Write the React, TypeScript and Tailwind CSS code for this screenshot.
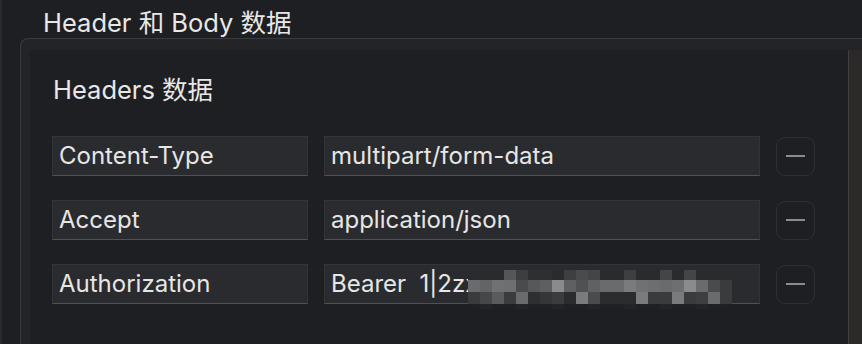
import React from "react";

const mosaic: [string, string, string][] = [
  ["#2a2b2e", "#6a6b6d", "#3a3b3d"],
  ["#2a2b2e", "#636466", "#46474a"],
  ["#2a2b2e", "#707173", "#5a5b5d"],
  ["#555658", "#6e6f71", "#3b3c3e"],
  ["#3d3e40", "#4a4b4d", "#6a6b6d"],
  ["#2e2f31", "#575859", "#2e2f31"],
  ["#2e2f31", "#5e5f61", "#353638"],
  ["#2a2b2e", "#8a8b8d", "#3b3c3e"],
  ["#3e3f41", "#5f6062", "#2b2c2e"],
  ["#4a4b4d", "#505153", "#7a7b7d"],
  ["#444547", "#606163", "#4a4b4d"],
  ["#2a2b2e", "#6a6b6d", "#2b2c2e"],
  ["#2a2b2e", "#6a6b6d", "#2b2c2e"],
  ["#3e3f41", "#7a7b7d", "#2b2c2e"],
  ["#2a2b2e", "#707173", "#7a7b7d"],
  ["#2a2b2e", "#6d6e70", "#3a3b3d"],
  ["#444547", "#6a6b6d", "#3a3b3d"],
  ["#2a2b2e", "#6e6f71", "#7a7b7d"],
  ["#444547", "#8a8b8d", "#3a3b3d"],
  ["#2a2b2e", "#6a6b6d", "#3e3f41"],
  ["#2a2b2e", "#4a4b4d", "#6a6b6d"],
  ["#2a2b2e", "#3a3b3d", "#3a3b3d"],
];

function Mosaic() {
  return (
    <svg
      width={264}
      height={39}
      viewBox="0 0 264 39"
      className="absolute left-[143px] top-[5px]"
    >
      {mosaic.map((c, i) => (
        <g key={i}>
          <rect x={i * 12} y={0} width={12} height={10} fill={c[0]} />
          <rect x={i * 12} y={10} width={12} height={12} fill={c[1]} />
          <rect x={i * 12} y={22} width={12} height={12} fill={c[2]} />
          <rect
            x={i * 12}
            y={34}
            width={12}
            height={5}
            fill={i % 3 === 1 ? "#232427" : "#1f2023"}
          />
        </g>
      ))}
    </svg>
  );
}

function MinusButton() {
  return (
    <div className="w-[39px] h-[39px] ml-[16px] rounded-[9px] border-[1.5px] border-[#2e2f33] flex items-center justify-center">
      <div className="w-[19px] h-[2px] bg-[#8c8c8e]" />
    </div>
  );
}

function Row({
  k,
  v,
  redact,
}: {
  k: string;
  v: string;
  redact?: boolean;
}) {
  return (
    <div className="flex items-center h-[40px]">
      <div className="w-[256px] h-[40px] bg-[#2a2b2e] border border-[#333437] border-b-[#505154] flex items-center pl-[6px] text-[24px] text-[#e6e6e6] whitespace-pre">
        {k}
      </div>
      <div className="relative w-[436px] h-[40px] ml-[16px] bg-[#2a2b2e] border border-[#333437] border-b-[#505154] flex items-center pl-[6px] text-[24px] text-[#e6e6e6] whitespace-pre">
        {v}
        {redact && <Mosaic />}
      </div>
      <MinusButton />
    </div>
  );
}

export default function App() {
  return (
    <div
      className="w-[862px] h-[344px] overflow-hidden bg-[#1e1f22] border-l-2 border-[#2a2b2e] text-[#e6e6e6]"
      style={{ fontFamily: "Inter, 'Noto Sans CJK SC', sans-serif" }}
    >
      <div className="h-[38px] pl-[41px] pt-[9px] text-[25.5px] leading-[28px] text-[#e8e8e8]">
        Header 和 Body 数据
      </div>
      <div className="ml-[18px] w-[900px] h-[320px] border-t border-l border-[#3a3b3e] rounded-tl-[8px] bg-[#222427] pt-[11px] pl-[9px]">
        <div className="flex h-[300px]">
          <div className="w-[818px] bg-[#1e1f22] pl-[22px] pt-[26px]">
            <div className="text-[25.5px] leading-[28px] text-[#e8e8e8] pl-[1px]">
              Headers 数据
            </div>
            <div className="mt-[32px] flex flex-col gap-[24px]">
              <Row k="Content-Type" v="multipart/form-data" />
              <Row k="Accept" v="application/json" />
              <Row k="Authorization" v="Bearer  1|2zx" redact />
            </div>
          </div>
          <div className="w-[15px] border-l border-[#3f3f41] bg-[#2b2a28]" />
        </div>
      </div>
    </div>
  );
}
